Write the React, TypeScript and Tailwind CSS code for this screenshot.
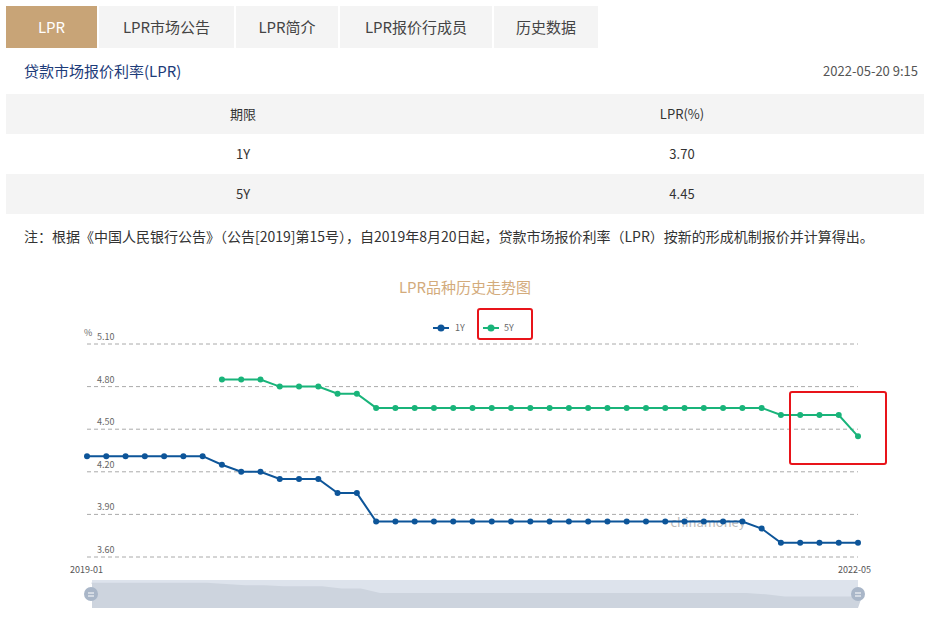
import React from 'react';

const X0 = 87;
const STEP = 771 / 40;
const yOf = (v: number) => 560 - (v - 3.6) * 142;

const oneY: number[] = [
  4.31, 4.31, 4.31, 4.31, 4.31, 4.31, 4.31, 4.25, 4.2, 4.2, 4.15, 4.15, 4.15, 4.05, 4.05,
  ...Array(20).fill(3.85), 3.8, 3.7, 3.7, 3.7, 3.7, 3.7,
];
const fiveY: (number | null)[] = [
  ...Array(7).fill(null), 4.85, 4.85, 4.85, 4.8, 4.8, 4.8, 4.75, 4.75,
  ...Array(21).fill(4.65), 4.6, 4.6, 4.6, 4.6, 4.45,
];

const pts = (d: (number | null)[]) =>
  d.map((v, i) => (v == null ? null : [X0 + i * STEP, yOf(v)] as [number, number])).filter(Boolean) as [number, number][];

const tabs = ['LPR', 'LPR市场公告', 'LPR简介', 'LPR报价行成员', '历史数据'];
const tabW = ['w-[91px]', 'w-[135px]', 'w-[102px]', 'w-[152px]', 'w-[104px]'];

function Chart() {
  const a = pts(oneY);
  const b = pts(fiveY);
  const grid = [5.1, 4.8, 4.5, 4.2, 3.9, 3.6];
  const area = a.map(([x, y]) => `${x + 4},${585 + (y - 455) * 0.16}`).join(' ');
  return (
    <svg width="930" height="350" viewBox="0 270 930 350" className="block">
      <text x="465" y="296" textAnchor="middle" fontSize="15" fill="#d3ab7c">LPR品种历史走势图</text>
      <line x1="433" y1="331" x2="449" y2="331" stroke="#0d5599" strokeWidth="2" />
      <circle cx="441" cy="331" r="3.5" fill="#0d5599" />
      <text x="455" y="334" fontSize="9" fill="#666">1Y</text>
      <line x1="483" y1="331" x2="499" y2="331" stroke="#19b47a" strokeWidth="2" />
      <circle cx="491" cy="331" r="3.5" fill="#19b47a" />
      <text x="504" y="334" fontSize="9" fill="#666">5Y</text>
      <rect x="478" y="312" width="54" height="30" rx="2" fill="none" stroke="#e8141a" strokeWidth="2" />
      <text x="84" y="339" fontSize="9" fill="#666">%</text>
      {grid.map((g) => (
        <g key={g}>
          <line x1="87" y1={yOf(g)} x2="858" y2={yOf(g)} stroke="#aaa" strokeDasharray="4 3" />
          <text x="97" y={yOf(g) - 4} fontSize="9" fill="#666">{g.toFixed(2)}</text>
        </g>
      ))}
      <text x="708" y="530" textAnchor="middle" fontSize="13" fill="#bbb">chinamoney</text>
      <polyline points={a.map((p) => p.join(',')).join(' ')} fill="none" stroke="#0d5599" strokeWidth="2" />
      {a.map(([x, y], i) => <circle key={i} cx={x} cy={y} r="3" fill="#0d5599" />)}
      <polyline points={b.map((p) => p.join(',')).join(' ')} fill="none" stroke="#19b47a" strokeWidth="2" />
      {b.map(([x, y], i) => <circle key={i} cx={x} cy={y} r="3" fill="#19b47a" />)}
      <rect x="790" y="395" width="96" height="72" rx="2" fill="none" stroke="#e8141a" strokeWidth="2" />
      <text x="70" y="576" fontSize="9" fill="#555">2019-01</text>
      <text x="838" y="576" fontSize="9" fill="#555">2022-05</text>
      <rect x="92" y="583" width="766" height="28" fill="#dde3ec" />
      <polygon points={`92,611 92,587 ${area} 858,611`} fill="#cdd4de" />
      <circle cx="91" cy="597" r="7" fill="#a9b6c8" />
      <circle cx="858" cy="597" r="7" fill="#a9b6c8" />
      <line x1="88" y1="596" x2="94" y2="596" stroke="#fff" />
      <line x1="88" y1="599" x2="94" y2="599" stroke="#fff" />
      <line x1="855" y1="596" x2="861" y2="596" stroke="#fff" />
      <line x1="855" y1="599" x2="861" y2="599" stroke="#fff" />
    </svg>
  );
}

export default function App() {
  return (
    <div className="w-[930px] h-[620px] overflow-hidden bg-white text-[#333]" style={{ fontFamily: '"Noto Sans CJK SC", "Noto Sans", sans-serif' }}>
      <div className="flex gap-[2px] pl-[6px] pt-[6px]">
        {tabs.map((t, i) => (
          <div key={t} className={`${tabW[i]} h-[42px] flex items-center justify-center text-[15px] ${i === 0 ? 'bg-[#c8a477] text-white' : 'bg-[#f4f4f4] text-[#444]'}`}>
            {t}
          </div>
        ))}
      </div>
      <div className="flex justify-between items-center h-[46px] px-[24px] pr-[12px]">
        <span className="text-[15px] text-[#1d3c7a]">贷款市场报价利率(LPR)</span>
        <span className="text-[13px] text-[#555]">2022-05-20 9:15</span>
      </div>
      <div className="mx-[6px] text-[13px]">
        {[['期限', 'LPR(%)', 'bg-[#f4f4f4]'], ['1Y', '3.70', 'bg-white'], ['5Y', '4.45', 'bg-[#f4f4f4]']].map(([a, b, bg]) => (
          <div key={a} className={`grid grid-cols-[474px_1fr] h-[40px] items-center ${bg}`}>
            <div className="text-center">{a}</div>
            <div className="text-center pr-[40px]">{b}</div>
          </div>
        ))}
      </div>
      <div className="px-[24px] mt-[12px] text-[14px] text-[#333]">
        注：根据《中国人民银行公告》（公告[2019]第15号），自2019年8月20日起，贷款市场报价利率（LPR）按新的形成机制报价并计算得出。
      </div>
      <div className="mt-[20px]">
        <Chart />
      </div>
    </div>
  );
}
